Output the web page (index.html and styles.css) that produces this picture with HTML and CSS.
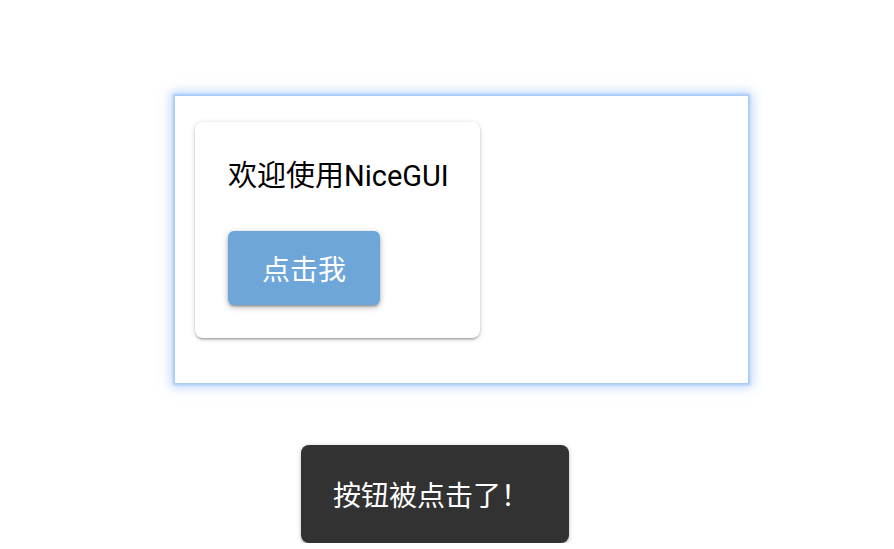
FILE: index.html
```html
<!DOCTYPE html>
<html lang="zh">
<head>
  <meta charset="UTF-8" />
  <meta name="viewport" content="width=device-width, initial-scale=1.0" />
  <title>NiceGUI</title>
  <link rel="stylesheet" href="styles.css">
</head>
<body>
  <div class="page">
    <div class="frame">
      <div class="card">
        <div class="label">欢迎使用NiceGUI</div>
        <button class="btn">点击我</button>
      </div>
    </div>
    <div class="notify">按钮被点击了！</div>
  </div>
</body>
</html>
```

FILE: styles.css
```css
body {
  margin: 0;
  background: #fff;
  font-family: Roboto, "Noto Sans CJK SC", sans-serif;
  color: #000;
}
.page {
  display: flex;
  flex-direction: column;
  align-items: flex-start;
  padding-top: 96px;
}
.frame {
  margin-left: 175px;
  width: 573px;
  height: 287px;
  box-sizing: border-box;
  padding: 26px 20px;
  background: #fff;
  box-shadow: 0 0 2px 2px #a9cbf7, 0 0 10px 4px rgba(120, 170, 250, 0.5);
}
.card {
  display: inline-flex;
  flex-direction: column;
  align-items: flex-start;
  gap: 33px;
  padding: 32px 31px 33px 33px;
  background: #fff;
  border-radius: 8px;
  box-shadow: 0 2px 2px rgba(0,0,0,0.14), 0 1px 5px rgba(0,0,0,0.2), 0 3px 1px -2px rgba(0,0,0,0.12);
}
.label {
  font-size: 29px;
  line-height: 44px;
}
.btn {
  font-family: Roboto, "Noto Sans CJK SC", sans-serif;
  font-size: 28px;
  color: #fff;
  background: #6fa6d9;
  border: none;
  border-radius: 6px;
  height: 74px;
  padding: 0 34px;
  box-shadow: 0 2px 6px rgba(0,0,0,0.3), 0 2px 2px rgba(0,0,0,0.14), 0 3px 1px -2px rgba(0,0,0,0.12);
  cursor: pointer;
}
.notify {
  margin-top: 62px;
  margin-left: 301px;
  display: flex;
  align-items: center;
  height: 98px;
  box-sizing: border-box;
  padding: 0 40px 0 32px;
  background: #323232;
  color: #fff;
  font-size: 28px;
  border-radius: 8px;
  box-shadow: 0 1px 5px rgba(0,0,0,0.2), 0 2px 2px rgba(0,0,0,0.14);
}
```
